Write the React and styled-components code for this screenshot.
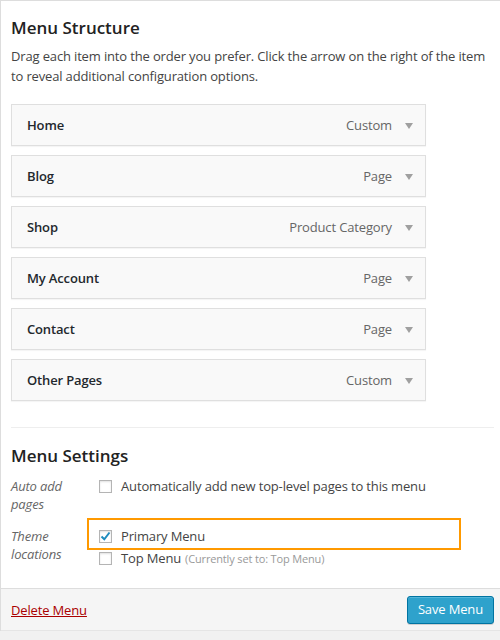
import React from "react";
import styled, { createGlobalStyle } from "styled-components";

const GlobalStyle = createGlobalStyle`
  html, body {
    margin: 0;
    padding: 0;
    background: #f1f1f1;
    overflow: hidden;
  }
  body {
    font-family: "Open Sans", "Liberation Sans", sans-serif;
    font-size: 13px;
    letter-spacing: -0.15px;
    color: #444;
  }
`;

const Panel = styled.div`
  width: 503px;
  background: #fff;
  border-top: 1px solid #ddd;
  border-left: 1px solid #ddd;
`;

const Body = styled.div`
  padding: 15px 10px 21px 10px;
`;

const Heading = styled.h3`
  margin: 0;
  font-size: 17px;
  line-height: 24px;
  font-weight: 600;
  letter-spacing: 0;
  color: #222;
`;

const Description = styled.p`
  margin: 6px 0 18px;
  line-height: 20px;
  color: #444;
`;

const ItemList = styled.ul`
  list-style: none;
  margin: 0;
  padding: 0;
  display: flex;
  flex-direction: column;
  gap: 9px;
  width: 415px;
`;

const Item = styled.li`
  box-sizing: border-box;
  height: 42px;
  display: flex;
  align-items: center;
  padding: 0 12px 0 15px;
  background: #f9f9f9;
  border: 1px solid #dfdfdf;
  box-shadow: 0 1px 1px rgba(0, 0, 0, 0.04);
`;

const ItemTitle = styled.span`
  flex: 1;
  font-weight: 600;
  color: #23282d;
`;

const ItemType = styled.span`
  color: #666;
  margin-right: 13px;
`;

const Arrow = styled.span`
  width: 0;
  height: 0;
  border-left: 4px solid transparent;
  border-right: 4px solid transparent;
  border-top: 6px solid #a0a0a0;
  margin-top: 1px;
`;

const Separator = styled.hr`
  margin: 26px 0 16px 0;
  border: 0;
  border-top: 1px solid #eee;
`;

const SettingsGrid = styled.div`
  margin-top: 9px;
  display: grid;
  grid-template-columns: 88px 1fr;
  row-gap: 14px;
`;

const Label = styled.div`
  font-style: italic;
  color: #666;
  line-height: 18px;
`;

const Options = styled.div`
  display: flex;
  flex-direction: column;
  gap: 4px;
`;

const Option = styled.label`
  position: relative;
  display: flex;
  align-items: center;
  height: 18px;
  color: #444;

  ${(p) =>
    p.$highlight &&
    `
    &::after {
      content: "";
      position: absolute;
      left: -12px;
      top: -9px;
      width: 370px;
      height: 28px;
      border: 2px solid #f90;
      pointer-events: none;
    }
  `}
`;

const Box = styled.span`
  box-sizing: border-box;
  width: 13px;
  height: 13px;
  margin-right: 9px;
  border: 1px solid #b4b4b4;
  background: #fff;
  box-shadow: inset 0 1px 2px rgba(0, 0, 0, 0.12);
  display: flex;
  align-items: center;
  justify-content: center;
`;

const Note = styled.span`
  margin-left: 4px;
  font-size: 11px;
  color: #999;
`;

const Footer = styled.div`
  box-sizing: border-box;
  height: 43px;
  display: flex;
  align-items: center;
  justify-content: space-between;
  padding: 0 10px 0 10px;
  background: #f5f5f5;
  border-top: 1px solid #ddd;
  border-bottom: 1px solid #e5e5e5;
`;

const DeleteLink = styled.a`
  color: #a00;
  text-decoration: underline;
  cursor: pointer;
`;

const SaveButton = styled.button`
  box-sizing: border-box;
  height: 28px;
  padding: 0 10px 1px;
  font-family: inherit;
  font-size: 13px;
  letter-spacing: inherit;
  color: #fff;
  background: #2ea2cc;
  border: 1px solid #0074a2;
  border-radius: 3px;
  box-shadow: inset 0 1px 0 rgba(120, 200, 230, 0.5),
    0 1px 0 rgba(0, 0, 0, 0.15);
  cursor: pointer;
`;

const items = [
  { title: "Home", type: "Custom" },
  { title: "Blog", type: "Page" },
  { title: "Shop", type: "Product Category" },
  { title: "My Account", type: "Page" },
  { title: "Contact", type: "Page" },
  { title: "Other Pages", type: "Custom" },
];

const Checkbox = ({ checked }) => (
  <Box>
    {checked && (
      <svg width="11" height="11" viewBox="0 0 11 11">
        <path
          d="M1.5 5.5 L4.3 8.3 L9.5 1.5"
          fill="none"
          stroke="#1e8cbe"
          strokeWidth="2"
        />
      </svg>
    )}
  </Box>
);

const App = () => (
  <>
    <GlobalStyle />
    <Panel>
      <Body>
        <Heading>Menu Structure</Heading>
        <Description>
          Drag each item into the order you prefer. Click the arrow on the
          right of the item to reveal additional configuration options.
        </Description>
        <ItemList>
          {items.map((item) => (
            <Item key={item.title}>
              <ItemTitle>{item.title}</ItemTitle>
              <ItemType>{item.type}</ItemType>
              <Arrow />
            </Item>
          ))}
        </ItemList>

        <Separator />

        <Heading>Menu Settings</Heading>
        <SettingsGrid>
          <Label>
            Auto add
            <br />
            pages
          </Label>
          <Options>
            <Option>
              <Checkbox />
              Automatically add new top-level pages to this menu
            </Option>
          </Options>

          <Label>
            Theme
            <br />
            locations
          </Label>
          <Options>
            <Option $highlight>
              <Checkbox checked />
              Primary Menu
            </Option>
            <Option>
              <Checkbox />
              Top Menu
              <Note>(Currently set to: Top Menu)</Note>
            </Option>
          </Options>
        </SettingsGrid>
      </Body>
      <Footer>
        <DeleteLink>Delete Menu</DeleteLink>
        <SaveButton>Save Menu</SaveButton>
      </Footer>
    </Panel>
  </>
);

export default App;
